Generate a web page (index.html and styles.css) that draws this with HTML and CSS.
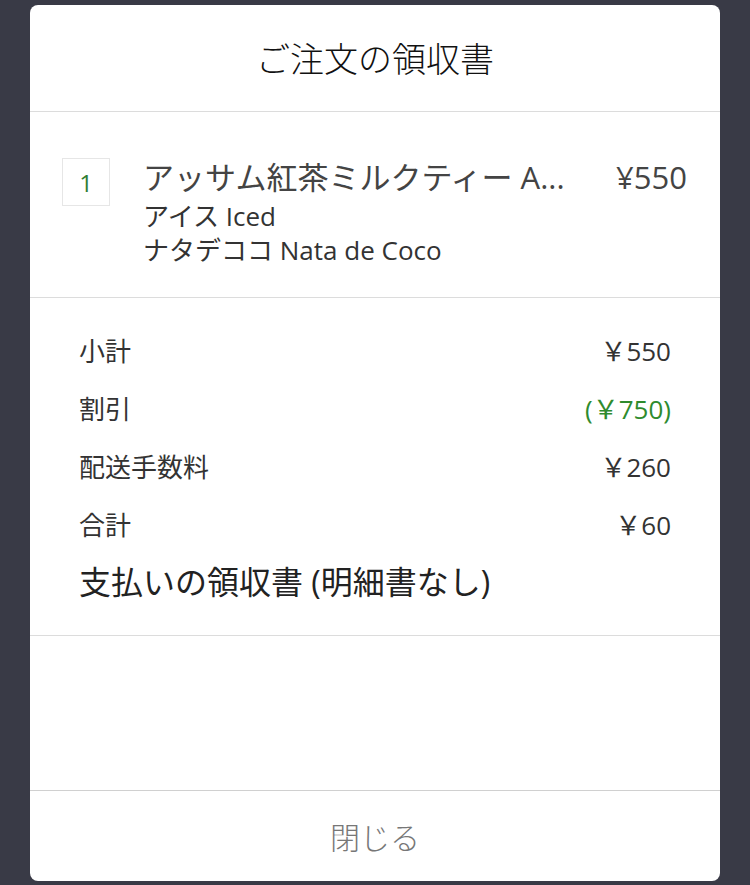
FILE: index.html
```html
<!DOCTYPE html>
<html lang="ja">
<head>
<meta charset="utf-8">
<link rel="stylesheet" href="styles.css">
</head>
<body>
<div class="modal">
  <div class="header">ご注文の領収書</div>
  <div class="item">
    <div class="qty">1</div>
    <div class="details">
      <div class="name-row">
        <span class="name">アッサム紅茶ミルクティー A...</span>
        <span class="price">¥550</span>
      </div>
      <div class="opt">アイス Iced</div>
      <div class="opt">ナタデココ Nata de Coco</div>
    </div>
  </div>
  <div class="summary">
    <div class="row"><span>小計</span><span>￥550</span></div>
    <div class="row"><span>割引</span><span class="green">(￥750)</span></div>
    <div class="row"><span>配送手数料</span><span>￥260</span></div>
    <div class="row"><span>合計</span><span>￥60</span></div>
    <div class="receipt">支払いの領収書 (明細書なし)</div>
  </div>
  <div class="spacer"></div>
  <div class="footer">閉じる</div>
</div>
</body>
</html>
```
FILE: styles.css
```css
html, body {
  margin: 0;
  padding: 0;
}
body {
  background: #393a46;
  width: 750px;
  height: 885px;
  overflow: hidden;
  font-family: "Open Sans", "Noto Sans CJK JP", sans-serif;
  color: #333;
}
.modal {
  margin: 5px 0 0 30px;
  width: 690px;
  height: 876px;
  background: #fff;
  border-radius: 8px;
  display: flex;
  flex-direction: column;
}
.header {
  height: 107px;
  border-bottom: 1px solid #dcdcdc;
  display: flex;
  align-items: center;
  justify-content: center;
  font-family: "Noto Sans CJK JP", sans-serif;
  font-size: 34px;
  font-weight: 300;
  color: #111;
  box-sizing: border-box;
  padding-bottom: 2px;
}
.item {
  height: 186px;
  box-sizing: border-box;
  border-bottom: 1px solid #dcdcdc;
  display: flex;
  padding: 46px 33px 0 32px;
}
.qty {
  width: 48px;
  height: 48px;
  box-sizing: border-box;
  border: 1px solid #e6e6e6;
  color: #2e7d32;
  font-size: 24px;
  display: flex;
  align-items: center;
  justify-content: center;
  flex-shrink: 0;
}
.details {
  flex: 1;
  margin-left: 33px;
}
.name-row {
  display: flex;
  justify-content: space-between;
  font-size: 31px;
  line-height: 38px;
  margin-bottom: 3px;
  color: #444;
}
.opt {
  font-size: 26px;
  line-height: 34px;
  color: #333;
}
.summary {
  height: 338px;
  box-sizing: border-box;
  border-bottom: 1px solid #dcdcdc;
  padding: 35px 49px 0 49px;
}
.row {
  display: flex;
  justify-content: space-between;
  font-size: 26px;
  line-height: 36px;
  height: 58px;
  color: #333;
}
.green {
  color: #2e8b2e;
}
.receipt {
  font-size: 32px;
  line-height: 40px;
  color: #222;
  margin-top: -3px;
}
.spacer {
  height: 154px;
  border-bottom: 1px solid #d0d0d0;
}
.footer {
  flex: 1;
  display: flex;
  align-items: center;
  justify-content: center;
  font-family: "Noto Sans CJK JP", sans-serif;
  font-size: 30px;
  font-weight: 300;
  color: #777;
}
```
